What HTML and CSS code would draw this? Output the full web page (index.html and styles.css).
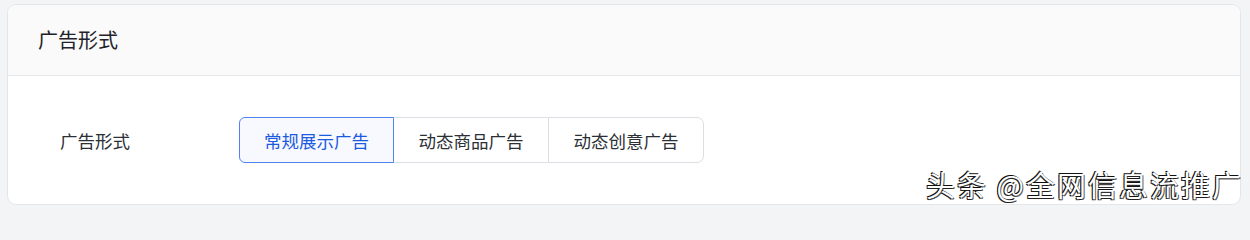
FILE: index.html
```html
<!DOCTYPE html>
<html lang="zh-CN">
<head>
<meta charset="utf-8">
<title>广告形式</title>
<link rel="stylesheet" href="styles.css">
</head>
<body>
<div class="page">
  <section class="card">
    <header class="card-header">广告形式</header>
    <div class="card-body">
      <div class="form-row">
        <div class="form-label">广告形式</div>
        <div class="segmented">
          <button class="seg seg-active">常规展示广告</button>
          <button class="seg">动态商品广告</button>
          <button class="seg">动态创意广告</button>
        </div>
      </div>
    </div>
  </section>
  <div class="watermark">头条 @全网信息流推广</div>
</div>
</body>
</html>
```
FILE: styles.css
```css
* { box-sizing: border-box; }
html, body { margin: 0; padding: 0; }
body {
  background: #f3f4f6;
  font-family: "Noto Sans CJK SC", "Noto Sans", sans-serif;
  width: 1250px;
  height: 212px;
  overflow: hidden;
}
.page {
  position: relative;
  padding: 4px 9px 0 7px;
  height: 212px;
}
.card {
  background: #ffffff;
  border: 1px solid #e4e6ea;
  border-radius: 9px;
  height: 201px;
  overflow: hidden;
}
.card-header {
  height: 71px;
  background: #fafafa;
  border-bottom: 1px solid #e6e7ea;
  display: flex;
  align-items: center;
  padding-left: 30px;
  padding-bottom: 2px;
  font-size: 20px;
  color: #1f2329;
}
.card-body {
  padding: 41px 0 0 52px;
}
.form-row {
  display: flex;
  align-items: center;
}
.form-label {
  width: 179px;
  font-size: 17.5px;
  color: #2b2f36;
}
.segmented {
  display: flex;
}
.seg {
  font-family: inherit;
  font-size: 17.5px;
  color: #2b2f36;
  background: #ffffff;
  border: 1px solid #dcdee3;
  height: 46px;
  width: 156px;
  padding: 0;
  margin: 0;
  margin-left: -1px;
  cursor: pointer;
}
.seg:first-child {
  margin-left: 0;
  border-radius: 6px 0 0 6px;
  width: 155px;
}
.seg:last-child {
  border-radius: 0 7px 7px 0;
}
.seg-active {
  position: relative;
  z-index: 1;
  border-color: #4f82f2;
  background: #f7f9ff;
  color: #1c5ae0;
}
.watermark {
  position: absolute;
  right: 7px;
  top: 165px;
  font-size: 29px;
  letter-spacing: 2px;
  color: #ffffff;
  text-shadow: -1px -1px 0 #111, -1px 1px 0 #222, 1px 1px 0 #555;
  white-space: nowrap;
  line-height: 38px;
}
```
